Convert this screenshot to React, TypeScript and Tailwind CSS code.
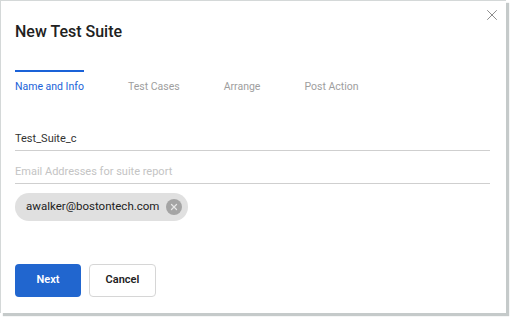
import { X } from 'lucide-react'

function Tab({ label, active }: { label: string; active?: boolean }) {
  return (
    <div className="flex flex-col">
      <div className={active ? 'h-[2px] bg-[#1a62d8]' : 'h-[2px]'} />
      <span
        className={
          'mt-[7px] text-[10.5px] leading-[16px] ' + (active ? 'text-[#1a62d8]' : 'text-[#9e9e9e]')
        }
      >
        {label}
      </span>
    </div>
  )
}

export default function App() {
  return (
    <div className="w-[512px] h-[320px] bg-white font-['Roboto',sans-serif]">
      <div className="relative w-[506px] h-[313px] bg-white border-l border-t border-[#d4d8d8] shadow-[3px_3px_1px_#c5caca]">
        <button className="absolute right-[5px] top-[5px] text-[#8a8a8a]">
          <X size={18} strokeWidth={1.3} />
        </button>

        <div className="pl-[14px] pr-[16px]">
          <h1 className="pt-[21px] text-[16px] leading-[20px] font-medium text-[#212121]">
            New Test Suite
          </h1>

          <div className="mt-[28px] flex gap-[44px]">
            <Tab label="Name and Info" active />
            <Tab label="Test Cases" />
            <Tab label="Arrange" />
            <Tab label="Post Action" />
          </div>

          <div className="mt-[36px] pb-[3px] border-b border-[#cfcfcf] text-[11px] leading-[16px] text-[#333]">
            Test_Suite_c
          </div>
          <div className="mt-[13px] pb-[3px] border-b border-[#cfcfcf] text-[11px] leading-[16px] text-[#c4c4c4]">
            Email Addresses for suite report
          </div>

          <div className="mt-[9px] inline-flex items-center h-[28px] pl-[11px] pr-[6px] rounded-full bg-[#e0e0e0]">
            <span className="text-[11.5px] text-[#222]">awalker@bostontech.com</span>
            <span className="ml-[7px] w-[16px] h-[16px] rounded-full bg-[#a4a4a4] flex items-center justify-center">
              <X size={10} strokeWidth={3} className="text-[#e6e6e6]" />
            </span>
          </div>

          <div className="mt-[43px] flex gap-[8px]">
            <button className="w-[66px] h-[33px] rounded-[4px] bg-[#2166cf] text-white text-[11px] font-semibold">
              Next
            </button>
            <button className="w-[67px] h-[33px] rounded-[4px] bg-white border border-[#d6d6d6] text-[#222] text-[11px] font-semibold">
              Cancel
            </button>
          </div>
        </div>
      </div>
    </div>
  )
}
